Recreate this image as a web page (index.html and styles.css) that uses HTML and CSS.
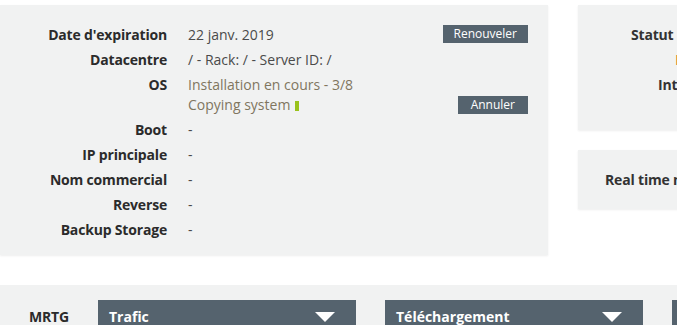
FILE: index.html
```html
<!DOCTYPE html>
<html lang="fr">
<head>
<meta charset="utf-8">
<title>Serveur</title>
<link rel="stylesheet" href="styles.css">
</head>
<body>
<div class="page">
  <div class="top">
    <section class="card info">
      <div class="label">Date d'expiration</div>
      <div class="value split"><span>22 janv. 2019</span><button class="btn">Renouveler</button></div>

      <div class="label">Datacentre</div>
      <div class="value">/ - Rack: / - Server ID: /</div>

      <div class="label">OS</div>
      <div class="value os">
        <div>Installation en cours - 3/8</div>
        <div class="split"><span>Copying system <i class="spin"></i></span><button class="btn btn-wide">Annuler</button></div>
      </div>

      <div class="label">Boot</div>
      <div class="value">-</div>

      <div class="label">IP principale</div>
      <div class="value">-</div>

      <div class="label">Nom commercial</div>
      <div class="value">-</div>

      <div class="label">Reverse</div>
      <div class="value">-</div>

      <div class="label">Backup Storage</div>
      <div class="value">-</div>
    </section>

    <div class="side">
      <section class="card status">
        <div class="s-row s-title">Statut du serveur</div>
        <div class="s-row s-orange">En cours</div>
        <div class="s-row s-int">Intervention</div>
      </section>
      <section class="card realtime">
        <div class="rt">Real time monitoring</div>
      </section>
    </div>
  </div>

  <div class="band">
    <div class="mrtg">MRTG</div>
    <div class="select"><span>Trafic</span><i class="tri"></i></div>
    <div class="select"><span>Téléchargement</span><i class="tri"></i></div>
    <div class="select"><span>Période</span><i class="tri"></i></div>
  </div>
</div>
</body>
</html>
```

FILE: styles.css
```css
* { box-sizing: border-box; }
html, body {
  margin: 0;
  padding: 0;
  background: #ffffff;
  overflow: hidden;
}
body {
  font-family: "Open Sans", "DejaVu Sans", sans-serif;
  font-size: 14px;
  color: #333;
}
.page {
  width: 980px;
}
.top {
  display: flex;
  align-items: flex-start;
  gap: 30px;
  padding-top: 5px;
}
.card {
  background: #f1f2f2;
  box-shadow: 0 1px 2px rgba(0, 0, 0, 0.07);
}
.info {
  width: 548px;
  display: grid;
  grid-template-columns: 167px 1fr;
  column-gap: 21px;
  row-gap: 5px;
  padding: 20px 20px 15px 0;
  line-height: 20px;
}
.label {
  font-weight: 700;
  letter-spacing: -0.18px;
  text-align: right;
  color: #2b2b2b;
}
.value {
  color: #4a4a4a;
}
.split {
  display: flex;
  justify-content: space-between;
  align-items: flex-start;
}
.os {
  color: #80765f;
}
.os .split { align-items: center; }
.spin {
  display: inline-block;
  width: 4px;
  height: 10px;
  background: #9ac21c;
  vertical-align: -1px;
  margin-left: 1px;
}
.btn {
  font-family: "Open Sans", "DejaVu Sans", sans-serif;
  font-size: 12px;
  line-height: 18px;
  height: 18px;
  padding: 0 11px;
  border: 0;
  border-radius: 0;
  background: #55636e;
  color: #fff;
}
.btn-wide {
  padding: 0 13px;
}
.side {
  width: 380px;
  display: flex;
  flex-direction: column;
  gap: 20px;
}
.status {
  height: 125px;
  padding-top: 20px;
  line-height: 20px;
  display: flex;
  flex-direction: column;
  gap: 5px;
}
.s-row { font-weight: 700; letter-spacing: -0.18px; }
.s-title { padding-left: 53px; }
.s-orange { padding-left: 97px; color: #d9822b; font-weight: 400; }
.s-int { padding-left: 80px; }
.realtime {
  height: 59px;
  display: flex;
  align-items: center;
  padding-left: 27px;
}
.rt { font-weight: 700; letter-spacing: -0.18px; }

.band {
  margin-top: 30px;
  background: #f1f2f2;
  height: 60px;
  padding-top: 15px;
  display: flex;
  align-items: flex-start;
  gap: 29px;
}
.mrtg {
  width: 69px;
  text-align: right;
  font-weight: 700;
  letter-spacing: -0.18px;
  line-height: 34px;
  color: #2b2b2b;
}
.select {
  width: 258px;
  height: 40px;
  background: #55636e;
  color: #fff;
  font-weight: 700;
  display: flex;
  justify-content: space-between;
  align-items: flex-start;
  padding: 7px 21px 0 11px;
  line-height: 20px;
  flex: none;
}
.tri {
  width: 0;
  height: 0;
  border-left: 10px solid transparent;
  border-right: 10px solid transparent;
  border-top: 10px solid #fff;
  margin-top: 5px;
}
```
